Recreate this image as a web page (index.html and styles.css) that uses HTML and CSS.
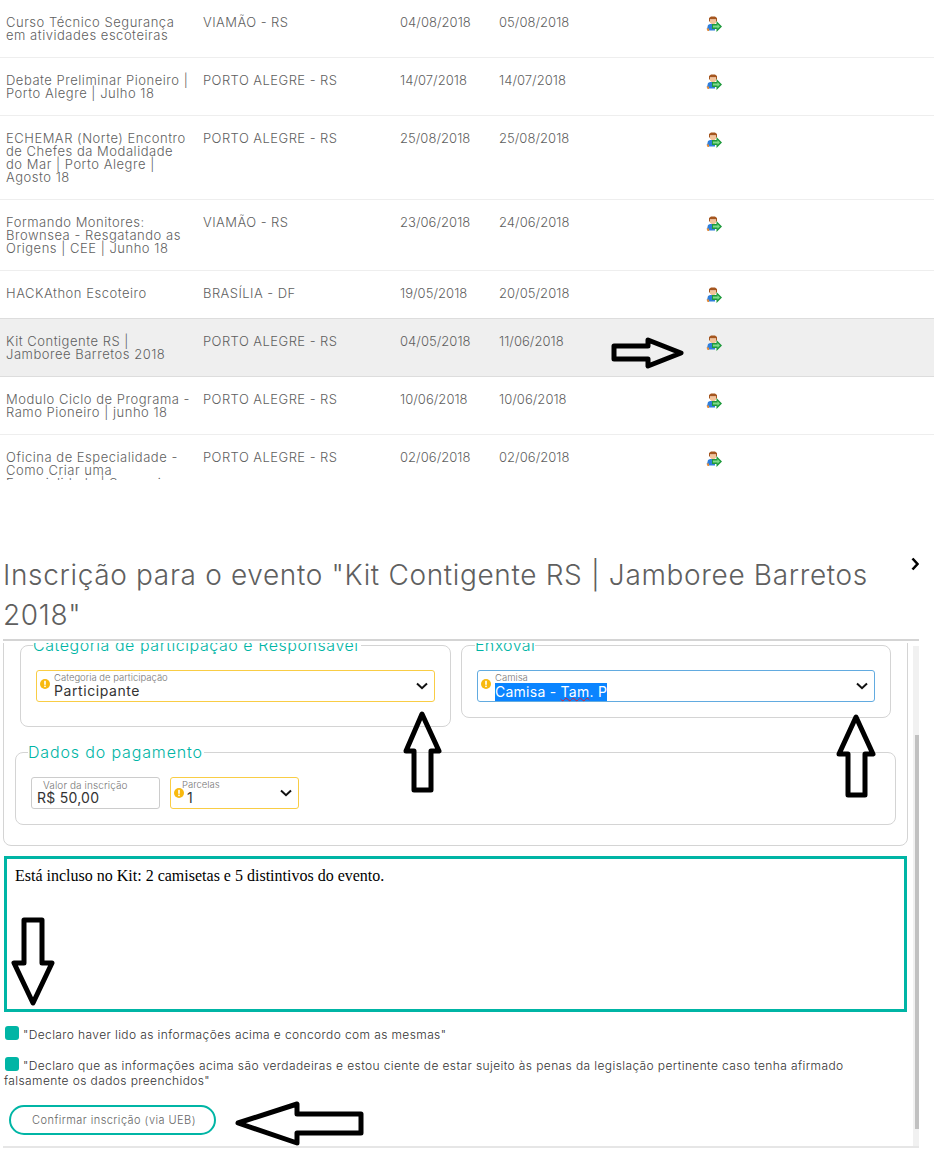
FILE: index.html
```html
<!DOCTYPE html>
<html lang="pt-BR">
<head>
 <meta charset="utf-8"/>
 <title>Inscrição para o evento</title>
 <link rel="stylesheet" href="styles.css">
</head>
<body>

<svg class="defs" width="0" height="0">
 <symbol id="ico-inscrever" viewBox="0 0 16 16">
  <path fill="#a5561f" d="M3 2 5 .5h4L11 2v3.500H10V3.500H4v2H3z"/>
  <path fill="#f3c49b" d="M4 3.500h6v3l-1.500 1.500h-3L4 6.500z"/>
  <path fill="#2f7fdc" d="M2 9 4 8h5v6.500H2.500L1 13z"/>
  <path fill="#e58b3a" d="M.5 12.500H3v2.500H1.500z"/>
  <path fill="#1f9a3c" d="M6 8h4.500V5L16 10.500 10.500 16v-3H6z"/>
  <path fill="#7fdc8a" d="M7 9.500h4.500V8l2.500 2.500-2.500 2.200V11.500H7z"/>
 </symbol>
 <symbol id="ico-alerta" viewBox="0 0 10 10">
  <circle cx="5" cy="5" r="5" fill="#f8b90e"/>
  <rect x="4.200" y="1.800" width="1.600" height="4" fill="#fff"/>
  <rect x="4.200" y="6.600" width="1.600" height="1.500" fill="#fff"/>
 </symbol>
 <symbol id="ico-seta" viewBox="0 0 12 8">
  <path d="M1 1.500 6 6.200 11 1.500" fill="none" stroke="#111" stroke-width="2"/>
 </symbol>
</svg>

<div class="lista">
 <div class="linha">
  <div>Curso Técnico Segurança<br>em atividades escoteiras</div>
  <div>VIAMÃO - RS</div><div>04/08/2018</div><div>05/08/2018</div>
  <svg class="ico"><use href="#ico-inscrever"/></svg>
 </div>
 <div class="linha">
  <div>Debate Preliminar Pioneiro |<br>Porto Alegre | Julho 18</div>
  <div>PORTO ALEGRE - RS</div><div>14/07/2018</div><div>14/07/2018</div>
  <svg class="ico"><use href="#ico-inscrever"/></svg>
 </div>
 <div class="linha">
  <div>ECHEMAR (Norte) Encontro<br>de Chefes da Modalidade<br>do Mar | Porto Alegre |<br>Agosto 18</div>
  <div>PORTO ALEGRE - RS</div><div>25/08/2018</div><div>25/08/2018</div>
  <svg class="ico"><use href="#ico-inscrever"/></svg>
 </div>
 <div class="linha">
  <div>Formando Monitores:<br>Brownsea - Resgatando as<br>Origens | CEE | Junho 18</div>
  <div>VIAMÃO - RS</div><div>23/06/2018</div><div>24/06/2018</div>
  <svg class="ico"><use href="#ico-inscrever"/></svg>
 </div>
 <div class="linha antes-sel">
  <div>HACKAthon Escoteiro</div>
  <div>BRASÍLIA - DF</div><div>19/05/2018</div><div>20/05/2018</div>
  <svg class="ico"><use href="#ico-inscrever"/></svg>
 </div>
 <div class="linha sel">
  <div>Kit Contigente RS |<br>Jamboree Barretos 2018</div>
  <div>PORTO ALEGRE - RS</div><div>04/05/2018</div><div>11/06/2018</div>
  <svg class="ico"><use href="#ico-inscrever"/></svg>
 </div>
 <div class="linha">
  <div>Modulo Ciclo de Programa -<br>Ramo Pioneiro | junho 18</div>
  <div>PORTO ALEGRE - RS</div><div>10/06/2018</div><div>10/06/2018</div>
  <svg class="ico"><use href="#ico-inscrever"/></svg>
 </div>
 <div class="linha">
  <div>Oficina de Especialidade -<br>Como Criar uma<br>Especialidade | Sapucaia</div>
  <div>PORTO ALEGRE - RS</div><div>02/06/2018</div><div>02/06/2018</div>
  <svg class="ico"><use href="#ico-inscrever"/></svg>
 </div>
</div>

<div class="cabecalho">
 <h1>Inscrição para o evento "Kit Contigente RS | Jamboree Barretos<br>2018"</h1>
 <svg class="fechar" viewBox="0 0 8 14"><path d="M1.500 1.500 6.500 7 1.500 12.500" fill="none" stroke="#000" stroke-width="2.600"/></svg>
</div>

<div class="corpo">
 <div class="rolagem">
  <div class="caixa">
   <div class="duas">
    <fieldset class="grupo g-cat">
     <legend>Categoria de participação e Responsável</legend>
     <div class="campo amarelo">
      <svg class="alerta"><use href="#ico-alerta"/></svg>
      <div class="txt"><span class="rot">Categoria de participação</span><span class="val val-part">Participante</span></div>
      <svg class="seta"><use href="#ico-seta"/></svg>
     </div>
    </fieldset>
    <fieldset class="grupo g-enx">
     <legend>Enxoval</legend>
     <div class="campo azul">
      <svg class="alerta"><use href="#ico-alerta"/></svg>
      <div class="txt"><span class="rot">Camisa</span><span class="val marcado">Camisa - <span class="sublinha">Tam</span>. P</span></div>
      <svg class="seta"><use href="#ico-seta"/></svg>
     </div>
    </fieldset>
   </div>
   <fieldset class="grupo g-pag">
    <legend>Dados do pagamento</legend>
    <div class="pag">
     <div class="campo cinza curto">
      <div class="txt"><span class="rot rot-valor">Valor da inscrição</span><span class="val">R$ 50,00</span></div>
     </div>
     <div class="campo amarelo curto parc">
      <svg class="alerta"><use href="#ico-alerta"/></svg>
      <div class="txt"><span class="rot">Parcelas</span><span class="val val-parc">1</span></div>
      <svg class="seta"><use href="#ico-seta"/></svg>
     </div>
    </div>
   </fieldset>
  </div>

  <div class="aviso">Está incluso no Kit: 2 camisetas e 5 distintivos do evento.</div>

  <p class="decl d1"><span class="chk"></span>"Declaro haver lido as informações acima e concordo com as mesmas"</p>
  <p class="decl d2"><span class="chk"></span>"Declaro que as informações acima são verdadeiras e estou ciente de estar sujeito às penas da legislação pertinente caso tenha afirmado<br>falsamente os dados preenchidos"</p>
  <button class="btn">Confirmar inscrição (via UEB)</button>
 </div>
 <div class="barra"><div class="polegar"></div></div>
</div>

<!-- setas desenhadas por cima do print -->
<svg class="anotacoes" viewBox="0 0 943 1159">
 <polygon points="614,346 648,346 648,340 681,353 648,366 648,359 614,359"/>
 <polygon points="422,714 439,751 431,751 431,790 414,790 414,751 406,751"/>
 <polygon points="856,717 873,754 865,754 865,795 848,795 848,754 839,754"/>
 <polygon points="24,920 42,920 42,963 52,963 33,1003 14,963 24,963"/>
 <polygon points="238,1123 297,1104 297,1114 361,1114 361,1133 297,1133 297,1143"/>
</svg>

</body>
</html>
```

FILE: styles.css
```css
html, body { margin: 0; padding: 0; background: #fff; }
body { position: relative; width: 943px; height: 1159px; overflow: hidden; font-family: "Inter", "Liberation Sans", sans-serif; color: #666; }
.defs { position: absolute; }

/* lista de eventos */
.lista { width: 934px; height: 480px; overflow: hidden; }
.linha {
  display: grid;
  grid-template-columns: 197px 197px 99px 207px 16px;
  padding: 16px 0 15px 6px;
  border-bottom: 1px solid #eee;
  font-size: 13px;
  font-weight: 300;
  line-height: 13px;
  letter-spacing: .05px;
  color: #5f5f5f;
  white-space: nowrap;
}
.linha div:nth-child(1) { letter-spacing: .52px; }
.linha div:nth-child(2) { letter-spacing: .45px; }
.linha.antes-sel { border-bottom-color: #ddd; }
.linha.sel { background: #efefef; border-bottom-color: #ddd; }
.ico { width: 16px; height: 16px; display: block; }

/* titulo */
.cabecalho { display: flex; justify-content: space-between; width: 919px; margin-top: 75px; padding-left: 3px; height: 84px; box-sizing: border-box; }
h1 { margin: 0; font-size: 28px; font-weight: 300; line-height: 40px; letter-spacing: .65px; color: #5f5f5f; white-space: nowrap; }
.fechar { width: 8px; height: 14px; margin-top: 2px; }

/* corpo */
.corpo { display: flex; width: 916px; height: 509px; margin-left: 3px; box-sizing: border-box; border-top: 2px solid #d4d4d4; border-bottom: 2px solid #e6e6e6; padding-top: 2px; }
.rolagem { width: 910px; overflow: hidden; }
.barra { width: 6px; margin-top: 3px; background: #f1f1f1; }
.polegar { margin: 89px 0 0 2px; height: 394px; background: #c1c1c1; }

.caixa { margin-top: -20px; width: 905px; box-sizing: border-box; height: 223px; padding: 11px 11px 0; border: 1px solid #d4d4d4; border-radius: 8px; }
.duas { display: flex; gap: 10px; margin-left: 5px; align-items: flex-start; }
.grupo { margin: 0; min-width: 0; box-sizing: border-box; border: 1px solid #d4d4d4; border-radius: 8px; padding: 15px 15px 24px; }
legend { padding: 0; font-size: 16px; line-height: 20px; font-weight: 300; color: #00b5a5; }
.g-cat { width: 431px; }
.g-cat legend { margin-left: -3px; padding-right: 2px; letter-spacing: .55px; }
.g-enx { width: 430px; padding-bottom: 15px; }
.g-enx legend { margin-left: -2px; letter-spacing: .35px; }
.g-pag { width: 881px; margin-top: 15px; padding: 15px; }
.g-pag legend { margin-left: -3px; padding-right: 1px; letter-spacing: .85px; }
.pag { display: flex; gap: 10px; }

.campo { position: relative; display: flex; justify-content: space-between; align-items: center; box-sizing: border-box; height: 32px; padding: 0 6px 0 17px; border: 1px solid #ccc; border-radius: 3px; }
.campo.amarelo { border-color: #f9cd45; }
.campo.azul { border-color: #62abe0; }
.curto { width: 129px; }
.cinza { padding-left: 5px; }
.parc { padding-left: 11px; }
.alerta { position: absolute; left: 3px; top: 8px; width: 10px; height: 10px; }
.parc .alerta { left: 3px; top: 10px; }
.txt { display: flex; flex-direction: column; align-items: flex-start; align-self: flex-start; }
.rot { font-size: 9.500px; line-height: 10px; font-weight: 300; color: #777; margin-top: 2px; white-space: nowrap; }
.rot-valor { margin-left: 6px; font-size: 10px; letter-spacing: .1px; }
.val { font-size: 14px; line-height: 15px; color: #333; font-weight: 400; letter-spacing: .25px; white-space: nowrap; }
.val-part { letter-spacing: .58px; }
.val-parc { margin-left: 5px; }
.marcado { background: #0a84ff; color: #fff; padding: 1px 0 2px; }
.sublinha { text-decoration: underline wavy #e0202a 1px; text-underline-offset: 0; }
.seta { width: 12px; height: 8px; }
.parc .seta { margin-top: -1px; }

/* aviso */
.aviso { width: 903px; height: 156px; margin: 10px 0 0 1px; box-sizing: border-box; border: 3px solid #00b5a5; padding: 8px; font-family: "Liberation Serif", serif; font-size: 16px; line-height: 18px; color: #000; }

/* declaracoes */
.decl { margin: 0 0 0 1px; font-size: 12px; line-height: 15px; font-weight: 300; letter-spacing: .39px; color: #333; white-space: nowrap; }
.d1 { margin-top: 14px; }
.d2 { margin-top: 15px; }
.chk { display: inline-block; width: 14px; height: 14px; margin: 0 4px 0 1px; vertical-align: -1px; border-radius: 3px; background: #00b5a5; }

.btn { display: block; width: 207px; height: 30px; margin: 17px 0 0 6px; padding: 0 0 0 3px; border: 2px solid #00b5a5; border-radius: 15px; background: #fff; font-family: inherit; font-size: 11px; font-weight: 300; letter-spacing: .45px; color: #666; }

/* setas por cima */
.anotacoes { position: absolute; left: 0; top: 0; width: 943px; height: 1159px; pointer-events: none; }
.anotacoes polygon { fill: none; stroke: #000; stroke-width: 5; stroke-linejoin: round; }
```
